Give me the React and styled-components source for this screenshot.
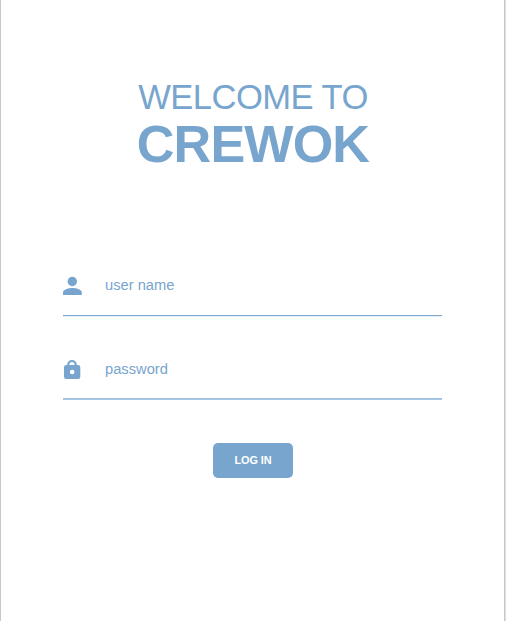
import React from "react";
import styled, { createGlobalStyle } from "styled-components";

const GlobalStyle = createGlobalStyle`
  * { box-sizing: border-box; }
  body { margin: 0; background: #fff; }
`;

const Screen = styled.main`
  display: flex;
  flex-direction: column;
  align-items: center;
  width: 506px;
  height: 621px;
  padding: 77px 2px 0 0;
  border-left: 1px solid #c9c9c9;
  background: linear-gradient(#c8c8c8, #c8c8c8) 503px 0 / 1px 100% no-repeat,
    linear-gradient(#e0e0e0, #e0e0e0) 504px 0 / 1px 100% no-repeat, #fff;
  color: #78a5ce;
  font-family: "Liberation Sans", Arial, sans-serif;
`;

const Heading = styled.h1`
  margin: 0 0 81px;
  padding-left: 1px;
  font-weight: 400;
  text-align: center;
  white-space: nowrap;
`;

const Greeting = styled.span`
  display: block;
  font-size: 34.6px;
  line-height: 40px;
  letter-spacing: -0.55px;
`;

const Brand = styled.strong`
  display: block;
  font-size: 52.2px;
  line-height: 55px;
  letter-spacing: -0.9px;
`;

const Form = styled.form`
  display: flex;
  flex-direction: column;
  align-items: center;
  width: 379px;
`;

const Field = styled.label`
  display: flex;
  align-items: center;
  width: 100%;
  height: ${({ $height }) => $height}px;
  padding-top: ${({ $inset }) => $inset}px;
  margin-bottom: ${({ $gap }) => $gap}px;
  border-bottom: 1px solid ${({ $line }) => $line};
  box-shadow: 0 1px 0 ${({ $edge }) => $edge};
`;

const FieldIcon = styled.svg`
  flex: none;
  width: 20px;
  height: 24px;
  margin-right: 22px;
  fill: currentColor;
`;

const Input = styled.input`
  flex: 1;
  min-width: 0;
  height: 22px;
  padding: 0;
  border: 0;
  outline: 0;
  background: transparent;
  color: inherit;
  font: 14.7px/22px "Liberation Sans", Arial, sans-serif;
  &::placeholder { color: #78a5ce; opacity: 1; }
`;

const LoginButton = styled.button`
  width: 80px;
  height: 35px;
  padding: 0 0 0 1px;
  border: 0;
  border-radius: 5px;
  background: #78a5ce;
  color: #fff;
  font: bold 10.9px/35px "Liberation Sans", Arial, sans-serif;
  letter-spacing: -0.1px;
`;

export default function App() {
  return (
    <>
      <GlobalStyle />
      <Screen>
        <Heading>
          <Greeting>WELCOME TO</Greeting>
          <Brand>CREWOK</Brand>
        </Heading>
        <Form onSubmit={(e) => e.preventDefault()}>
          <Field $height={63} $inset={2} $gap={21} $line="#7ca9d1" $edge="#e3eef9">
            <FieldIcon viewBox="0 0 20 24">
              <circle cx="9.3" cy="8.5" r="4.7" />
              <path d="M0 22V19.3C0 16.5 6.2 15 9.4 15S18.8 16.5 18.8 19.3V22Z" />
            </FieldIcon>
            <Input placeholder="user name" aria-label="user name" />
          </Field>
          <Field $height={62} $inset={3} $gap={44} $line="#a0c0df" $edge="#a8c5e1">
            <FieldIcon viewBox="0 0 20 24">
              <path
                fillRule="evenodd"
                d="M3 8.1H4.2V7.7A4.8 4.8 0 0 1 13.8 7.7V8.1H15.1A2.2 2.2 0 0 1 17.3 10.3V19.8A2.2 2.2 0 0 1 15.1 22H3.2A2.2 2.2 0 0 1 1 19.8V10.3A2.2 2.2 0 0 1 3 8.1ZM6.4 8.1H11.6V7.7A2.6 2.6 0 0 0 6.4 7.7ZM9.2 12.7A2.3 2.3 0 1 0 9.2 17.3A2.3 2.3 0 1 0 9.2 12.7Z"
              />
            </FieldIcon>
            <Input type="password" placeholder="password" aria-label="password" />
          </Field>
          <LoginButton type="submit">LOG IN</LoginButton>
        </Form>
      </Screen>
    </>
  );
}
